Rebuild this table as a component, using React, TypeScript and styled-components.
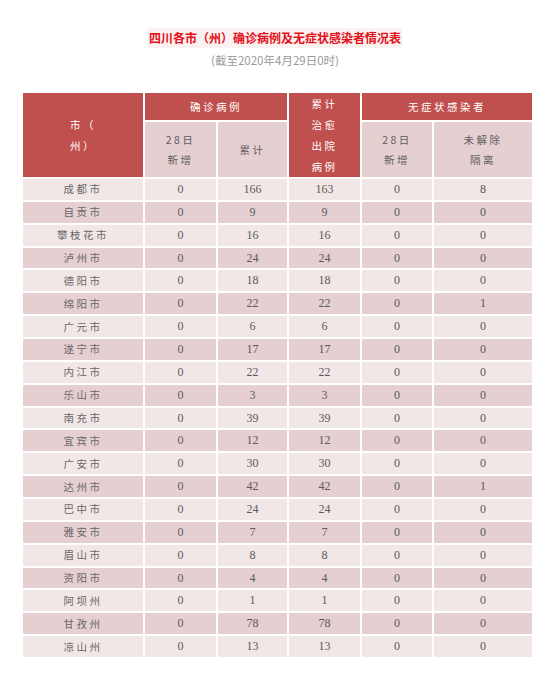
import React from "react";
import styled, { createGlobalStyle } from "styled-components";

const Global = createGlobalStyle`
  html, body { margin: 0; padding: 0; background: #fff; }
  body { font-family: "Liberation Serif", "Noto Sans CJK SC", serif; }
`;

const Page = styled.div`
  width: 550px;
  padding-top: 28px;
  display: flex;
  flex-direction: column;
  align-items: center;
`;

const Title = styled.h1`
  margin: 0;
  font-family: "Noto Sans CJK SC", sans-serif;
  font-size: 12px;
  line-height: 20px;
  font-weight: 700;
  color: #e3101a;
  background: #faf1f1;
  padding: 0 1px;
`;

const Subtitle = styled.div`
  margin-top: 2px;
  font-family: "Noto Sans CJK SC", sans-serif;
  font-size: 11.5px;
  line-height: 20px;
  color: #9a9a9a;
`;

const Grid = styled.div`
  margin-top: 23px;
  align-self: flex-start;
  margin-left: 23px;
  display: grid;
  grid-template-columns: 120px 71px 69px 71px 70px 98px;
  grid-template-rows: 27px 55px;
  grid-auto-rows: 20.86px;
  gap: 2px;
`;

type CellProps = { $row?: string; $col?: string; $tone: "head" | "sub" | "dark" | "light" };

const bg = { head: "#c0504d", sub: "#e6cfd0", dark: "#e6cfd0", light: "#f2e7e7" };

const Cell = styled.div<CellProps>`
  ${(p) => (p.$row ? `grid-row: ${p.$row};` : "")}
  ${(p) => (p.$col ? `grid-column: ${p.$col};` : "")}
  background: ${(p) => bg[p.$tone]};
  display: flex;
  align-items: center;
  justify-content: center;
  text-align: center;
  color: ${(p) => (p.$tone === "head" ? "#fff" : "#5a5a5a")};
`;

const Cjk = styled.span<{ $lh?: number; $size?: number }>`
  font-family: "Noto Sans CJK SC", sans-serif;
  font-size: ${(p) => p.$size ?? 10.5}px;
  letter-spacing: 2.5px;
  line-height: ${(p) => p.$lh ?? 20}px;
  font-weight: 400;
  white-space: pre-line;
`;

const Num = styled.span`
  font-family: "Liberation Serif", serif;
  font-size: 12px;
  color: #5a5a5a;
`;

const SubHead = styled(Cjk)`
  color: #606060;
`;

const CityName = styled(Cjk)`
  color: #686868;
`;

const data: [string, number, number, number, number, number][] = [
  ["成都市", 0, 166, 163, 0, 8],
  ["自贡市", 0, 9, 9, 0, 0],
  ["攀枝花市", 0, 16, 16, 0, 0],
  ["泸州市", 0, 24, 24, 0, 0],
  ["德阳市", 0, 18, 18, 0, 0],
  ["绵阳市", 0, 22, 22, 0, 1],
  ["广元市", 0, 6, 6, 0, 0],
  ["遂宁市", 0, 17, 17, 0, 0],
  ["内江市", 0, 22, 22, 0, 0],
  ["乐山市", 0, 3, 3, 0, 0],
  ["南充市", 0, 39, 39, 0, 0],
  ["宜宾市", 0, 12, 12, 0, 0],
  ["广安市", 0, 30, 30, 0, 0],
  ["达州市", 0, 42, 42, 0, 1],
  ["巴中市", 0, 24, 24, 0, 0],
  ["雅安市", 0, 7, 7, 0, 0],
  ["眉山市", 0, 8, 8, 0, 0],
  ["资阳市", 0, 4, 4, 0, 0],
  ["阿坝州", 0, 1, 1, 0, 0],
  ["甘孜州", 0, 78, 78, 0, 0],
  ["凉山州", 0, 13, 13, 0, 0],
];

export default function App() {
  return (
    <>
      <Global />
      <Page>
        <Title>四川各市（州）确诊病例及无症状感染者情况表</Title>
        <Subtitle>(截至2020年4月29日0时)</Subtitle>
        <Grid>
          <Cell $tone="head" $row="1 / 3" $col="1">
            <Cjk $lh={21}>{"市（\n州）"}</Cjk>
          </Cell>
          <Cell $tone="head" $row="1" $col="2 / 4">
            <Cjk>确诊病例</Cjk>
          </Cell>
          <Cell $tone="head" $row="1 / 3" $col="4">
            <Cjk $lh={21}>{"累计\n治愈\n出院\n病例"}</Cjk>
          </Cell>
          <Cell $tone="head" $row="1" $col="5 / 7">
            <Cjk>无症状感染者</Cjk>
          </Cell>
          <Cell $tone="sub" $row="2" $col="2">
            <SubHead>{"28日\n新增"}</SubHead>
          </Cell>
          <Cell $tone="sub" $row="2" $col="3">
            <SubHead>累计</SubHead>
          </Cell>
          <Cell $tone="sub" $row="2" $col="5">
            <SubHead>{"28日\n新增"}</SubHead>
          </Cell>
          <Cell $tone="sub" $row="2" $col="6">
            <SubHead>{"未解除\n隔离"}</SubHead>
          </Cell>
          {data.map((r, i) => {
            const tone = i % 2 === 0 ? "light" : "dark";
            return (
              <React.Fragment key={r[0]}>
                <Cell $tone={tone}>
                  <CityName>{r[0]}</CityName>
                </Cell>
                {r.slice(1).map((v, j) => (
                  <Cell key={j} $tone={tone}>
                    <Num>{v}</Num>
                  </Cell>
                ))}
              </React.Fragment>
            );
          })}
        </Grid>
      </Page>
    </>
  );
}
